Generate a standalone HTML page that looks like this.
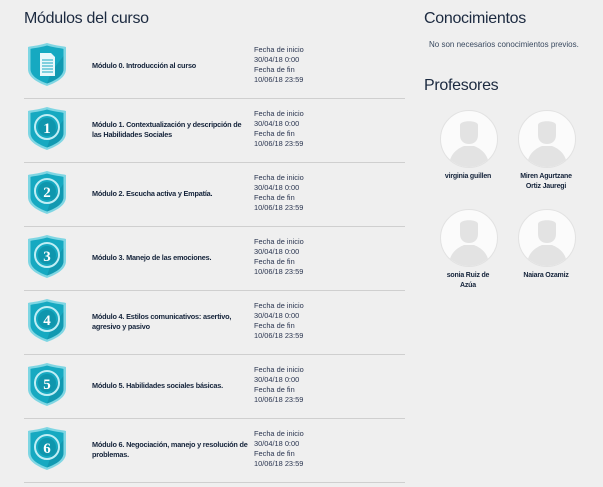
<!DOCTYPE html>
<html><head><meta charset="utf-8"><style>
body{margin:0;width:603px;height:487px;background:#efefef;font-family:"Liberation Sans",sans-serif;position:relative;overflow:hidden;color:#1c2a40}
.h{position:absolute;font-size:16px;color:#1c2a40;letter-spacing:-0.3px}
.row{position:absolute;left:24px;width:381px;height:64px;border-bottom:1px solid #cfcfcf}
.ic{position:absolute;left:3px;top:8px}
.t{position:absolute;left:68px;width:156px;font-size:7.3px;font-weight:bold;line-height:10px;top:50%;transform:translateY(-50%);letter-spacing:-0.2px;color:#14233a}
.d{position:absolute;left:230px;top:11px;font-size:7.4px;line-height:10px;color:#2a3550}
.av{position:absolute;width:56px;height:56px;border-radius:50%;background:#fbfbfb;border:1px solid #e2e2e2;overflow:hidden}
.nm{position:absolute;width:64px;text-align:center;font-size:7px;font-weight:bold;line-height:10px;letter-spacing:-0.2px;color:#14233a}
</style></head><body>
<div class="h" style="left:24px;top:10px">Módulos del curso</div>
<div class="h" style="left:424px;top:10px">Conocimientos</div>
<div style="position:absolute;left:429px;top:40px;font-size:8px;color:#3a4a60">No son necesarios conocimientos previos.</div>
<div class="h" style="left:424px;top:77px">Profesores</div>

<svg width="0" height="0" style="position:absolute"><defs>
<g id="sh"><path d="M20 1 C10 4 4 4 1 5 L1 27 C1 36 12 41 20 44 C28 41 39 36 39 27 L39 5 C36 4 30 4 20 1Z" fill="#7fd6e3"/>
<path d="M20 3.5 C11 6 6 6 3.5 7 L3.5 27 C3.5 34.5 13 39 20 41.5 C27 39 36.5 34.5 36.5 27 L36.5 7 C34 6 29 6 20 3.5Z" fill="#16a9c1"/>
<path d="M20 41.5 C27 39 36.5 34.5 36.5 27 L36.5 14 L24 30Z" fill="#0f8fa6" opacity=".6"/></g>
<g id="rg"><circle cx="20" cy="21" r="12" fill="none" stroke="#bfeef5" stroke-width="2"/><circle cx="20" cy="21" r="9" fill="#0f96ad"/></g>
<g id="p"><path d="M19 14 C19 9 37 9 37 14 L37 24 C37 30 33 33 28 33 C23 33 19 30 19 24Z" fill="#e3e3e3"/><path d="M8 56 C8 42 18 37 23 35 L33 35 C38 37 48 42 48 56Z" fill="#e3e3e3"/></g>
</defs></svg>

<div class="row" style="top:34px">
<svg class="ic" width="40" height="45"><use href="#sh"/><path d="M13 11 L24 11 L28 15 L28 34 L13 34Z" fill="#e8f8fb"/><g stroke="#16a9c1" stroke-width="1"><line x1="15" y1="18" x2="26" y2="18"/><line x1="15" y1="21" x2="26" y2="21"/><line x1="15" y1="24" x2="26" y2="24"/><line x1="15" y1="27" x2="26" y2="27"/><line x1="15" y1="30" x2="26" y2="30"/></g></svg>
<div class="t">Módulo 0. Introducción al curso</div>
<div class="d">Fecha de inicio<br>30/04/18 0:00<br>Fecha de fin<br>10/06/18 23:59</div></div>

<div class="row" style="top:98px"><svg class="ic" width="40" height="45"><use href="#sh"/><use href="#rg"/><text x="20" y="27" font-size="15" font-weight="bold" fill="#fff" text-anchor="middle" font-family="Liberation Serif">1</text></svg>
<div class="t">Módulo 1. Contextualización y descripción de las Habilidades Sociales</div>
<div class="d">Fecha de inicio<br>30/04/18 0:00<br>Fecha de fin<br>10/06/18 23:59</div></div>

<div class="row" style="top:162px"><svg class="ic" width="40" height="45"><use href="#sh"/><use href="#rg"/><text x="20" y="27" font-size="15" font-weight="bold" fill="#fff" text-anchor="middle" font-family="Liberation Serif">2</text></svg>
<div class="t">Módulo 2. Escucha activa y Empatía.</div>
<div class="d">Fecha de inicio<br>30/04/18 0:00<br>Fecha de fin<br>10/06/18 23:59</div></div>

<div class="row" style="top:226px"><svg class="ic" width="40" height="45"><use href="#sh"/><use href="#rg"/><text x="20" y="27" font-size="15" font-weight="bold" fill="#fff" text-anchor="middle" font-family="Liberation Serif">3</text></svg>
<div class="t">Módulo 3. Manejo de las emociones.</div>
<div class="d">Fecha de inicio<br>30/04/18 0:00<br>Fecha de fin<br>10/06/18 23:59</div></div>

<div class="row" style="top:290px"><svg class="ic" width="40" height="45"><use href="#sh"/><use href="#rg"/><text x="20" y="27" font-size="15" font-weight="bold" fill="#fff" text-anchor="middle" font-family="Liberation Serif">4</text></svg>
<div class="t">Módulo 4. Estilos comunicativos: asertivo, agresivo y pasivo</div>
<div class="d">Fecha de inicio<br>30/04/18 0:00<br>Fecha de fin<br>10/06/18 23:59</div></div>

<div class="row" style="top:354px"><svg class="ic" width="40" height="45"><use href="#sh"/><use href="#rg"/><text x="20" y="27" font-size="15" font-weight="bold" fill="#fff" text-anchor="middle" font-family="Liberation Serif">5</text></svg>
<div class="t">Módulo 5. Habilidades sociales básicas.</div>
<div class="d">Fecha de inicio<br>30/04/18 0:00<br>Fecha de fin<br>10/06/18 23:59</div></div>

<div class="row" style="top:418px"><svg class="ic" width="40" height="45"><use href="#sh"/><use href="#rg"/><text x="20" y="27" font-size="15" font-weight="bold" fill="#fff" text-anchor="middle" font-family="Liberation Serif">6</text></svg>
<div class="t">Módulo 6. Negociación, manejo y resolución de problemas.</div>
<div class="d">Fecha de inicio<br>30/04/18 0:00<br>Fecha de fin<br>10/06/18 23:59</div></div>

<div class="av" style="left:440px;top:110px"><svg width="56" height="56"><use href="#p"/></svg></div>
<div class="av" style="left:518px;top:110px"><svg width="56" height="56"><use href="#p"/></svg></div>
<div class="av" style="left:440px;top:209px"><svg width="56" height="56"><use href="#p"/></svg></div>
<div class="av" style="left:518px;top:209px"><svg width="56" height="56"><use href="#p"/></svg></div>
<div class="nm" style="left:436px;top:172px">virginia guillen</div>
<div class="nm" style="left:514px;top:172px">Miren Agurtzane Ortiz Jauregi</div>
<div class="nm" style="left:440px;top:271px;width:56px">sonia Ruiz de Azúa</div>
<div class="nm" style="left:514px;top:271px">Naiara Ozamiz</div>
</body></html>
